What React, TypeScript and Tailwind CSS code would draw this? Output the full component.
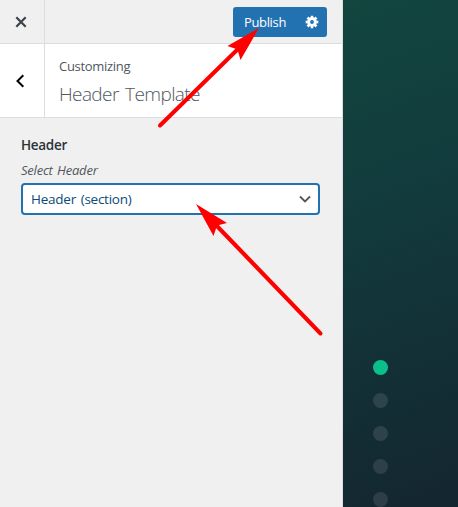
import React from "react";

const dots = ["bg-[#0bbf8c]", "bg-[#2d444a]", "bg-[#2d4249]", "bg-[#2d4048]", "bg-[#2d3e47]"];

function Gear() {
  return (
    <svg width="14" height="14" viewBox="0 0 14 14" fill="none" stroke="white" aria-hidden="true">
      <circle cx="7" cy="7" r="3.4" strokeWidth="3" />
      <circle cx="7" cy="7" r="5.35" strokeWidth="2" pathLength="80" strokeDasharray="6 4" strokeDashoffset="3" />
    </svg>
  );
}

function Arrows() {
  return (
    <svg className="pointer-events-none absolute inset-0" width="458" height="507" viewBox="0 0 458 507" fill="#f00" aria-hidden="true">
      <path d="M160 125.500 239 48M320.500 333.500 215 224" stroke="#f00" strokeWidth="4" strokeLinecap="round" />
      <path d="M259 28 227.500 46 237.500 49.500 240.500 60Z" />
      <path d="M196 204 227 223 217 225.500 213.500 236Z" />
    </svg>
  );
}

export default function App() {
  return (
    <div className="relative flex h-[507px] w-[458px] overflow-hidden bg-[#f0f0f0] font-['Open_Sans','Noto_Sans',sans-serif]">
      <aside className="flex w-[343px] shrink-0 flex-col border-r border-[#ddd]">
        <header className="flex h-11 border-b border-[#ddd]">
          <button className="flex w-[45px] items-center justify-center border-r border-[#ddd] pr-[2px]" aria-label="Close">
            <svg width="12" height="12" viewBox="0 0 12 12" fill="none" stroke="#3c434a" strokeWidth="2.2">
              <path d="m1.300 1.300 9.400 9.400M10.700 1.300l-9.400 9.400" />
            </svg>
          </button>
          <div className="ml-auto mr-[15px] mt-[7px] flex h-[30px] overflow-hidden rounded-[3px] bg-[#2271b1] text-white">
            <button className="w-16 whitespace-nowrap text-[13px] leading-[29px] tracking-[-0.35px]">Publish</button>
            <button className="flex w-[30px] items-center justify-center pr-px" aria-label="Publish settings"><Gear /></button>
          </div>
        </header>
        <section className="flex h-[74px] border-b border-[#ddd] bg-white">
          <button className="flex w-[45px] items-center justify-center border-r border-[#ddd] pr-1" aria-label="Back">
            <svg width="10" height="14" viewBox="0 0 10 14" fill="none" stroke="black" strokeWidth="2">
              <path d="M8.300 1.200 2.500 7l5.800 5.800" />
            </svg>
          </button>
          <div className="whitespace-nowrap pl-[14px] pt-[13px] text-[#50575e]">
            <p className="text-[13px] leading-[19px] tracking-[-0.3px]">Customizing</p>
            <h1 className="mt-[5px] text-[19px] font-light leading-[26px] tracking-[-0.6px] [word-spacing:2px]">Header Template</h1>
          </div>
        </section>
        <section className="whitespace-nowrap pl-[21px] pt-[17px]">
          <h2 className="text-[13.5px] font-semibold leading-[21px] tracking-[-0.3px] text-[#2c3338]">Header</h2>
          <p className="mt-[5px] text-[13px] italic leading-[18px] tracking-[-0.22px] text-[#50575e] [word-spacing:1.300px]">Select Header</p>
          <button className="mt-[4px] flex h-8 w-[299px] items-center justify-between rounded border-2 border-[#2271b1] bg-white pl-2 pr-[7px] text-[13.5px] tracking-[-0.25px] text-[#0a4b78] [word-spacing:1.500px]">
            <span>Header (section)</span>
            <svg width="12" height="8" viewBox="0 0 12 8" fill="none" stroke="#555" strokeWidth="1.8">
              <path d="m1 1.500 5 5 5-5" />
            </svg>
          </button>
        </section>
      </aside>
      <main className="flex grow flex-col gap-[18px] bg-[linear-gradient(160deg,#12463f_0%,#123c3d_36%,#132f36_72%,#14262f_100%)] pl-[30px] pt-[360px]">
        {dots.map((color) => <span key={color} className={`size-[15px] shrink-0 rounded-full ${color}`} />)}
      </main>
      <Arrows />
    </div>
  );
}
